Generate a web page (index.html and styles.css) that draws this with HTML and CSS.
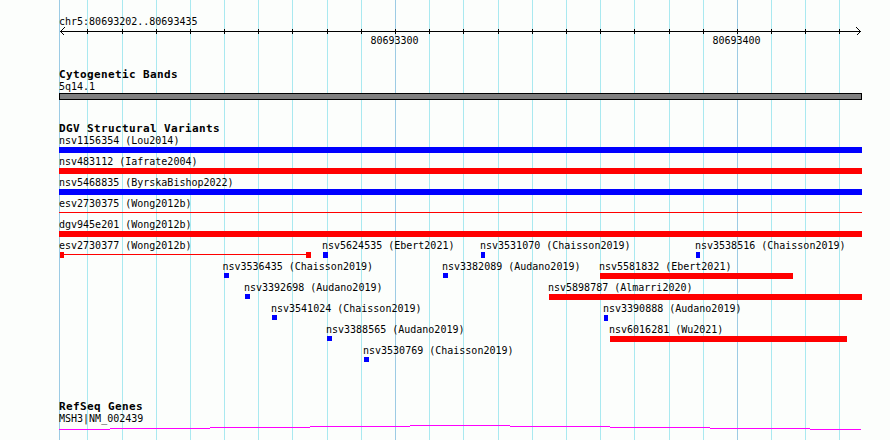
FILE: index.html
```html
<!DOCTYPE html>
<html lang="en">
<head>
<meta charset="utf-8">
<title>chr5:80693202..80693435</title>
<link rel="stylesheet" href="styles.css">
</head>
<body>
<div class="browser">
  <svg class="grid" width="890" height="440" viewBox="0 0 890 440" shape-rendering="crispEdges">
    <path class="major" d="M59.5 0V440M395.5 0V440M737.5 0V440"/>
    <path class="minor" d="M87.5 0V440M122.5 0V440M156.5 0V440M190.5 0V440M224.5 0V440M258.5 0V440M292.5 0V440M327.5 0V440M361.5 0V440M429.5 0V440M463.5 0V440M498.5 0V440M532.5 0V440M566.5 0V440M600.5 0V440M634.5 0V440M669.5 0V440M703.5 0V440M771.5 0V440M805.5 0V440M839.5 0V440"/>
  </svg>
  <div class="tracks">
    <svg class="canvas" width="890" height="68" viewBox="0 0 890 68">
      <text class="lbl" x="59" y="25">chr5:80693202..80693435</text>
      <g class="axis" shape-rendering="crispEdges">
        <path d="M60 31.5H861"/>
        <path d="M87.5 29V34M122.5 29V34M156.5 29V34M190.5 29V34M224.5 29V34M258.5 29V34M292.5 29V34M327.5 29V34M361.5 29V34M395.5 29V34M429.5 29V34M463.5 29V34M498.5 29V34M532.5 29V34M566.5 29V34M600.5 29V34M634.5 29V34M669.5 29V34M703.5 29V34M737.5 29V34M771.5 29V34M805.5 29V34M839.5 29V34"/>
        <polyline class="arrow" points="64.5,27.5 60.5,31.5 64.5,35.5"/>
        <polyline class="arrow" points="856.5,27.5 860.5,31.5 856.5,35.5"/>
      </g>
      <text class="lbl mid" x="394.5" y="44">80693300</text>
      <text class="lbl mid" x="736.5" y="44">80693400</text>
    </svg>

    <section class="track">
      <div class="track-title">Cytogenetic Bands</div>
      <div class="track-sub">5q14.1</div>
      <svg class="canvas" width="890" height="30" viewBox="0 92 890 30" shape-rendering="crispEdges">
        <rect class="band" x="59.5" y="93.5" width="802" height="6"/>
      </svg>
    </section>

    <section class="track">
      <div class="track-title">DGV Structural Variants</div>
      <svg class="canvas" width="890" height="265" viewBox="0 135 890 265" shape-rendering="crispEdges">
        <text class="lbl" x="59" y="144">nsv1156354 (Lou2014)</text>
        <rect class="blue" x="59" y="147" width="803" height="6"/>

        <text class="lbl" x="59" y="165">nsv483112 (Iafrate2004)</text>
        <rect class="red" x="59" y="168" width="803" height="6"/>

        <text class="lbl" x="59" y="186">nsv5468835 (ByrskaBishop2022)</text>
        <rect class="blue" x="59" y="189" width="803" height="6"/>

        <text class="lbl" x="59" y="207">esv2730375 (Wong2012b)</text>
        <rect class="red" x="59" y="212" width="803" height="1"/>

        <text class="lbl" x="59" y="228">dgv945e201 (Wong2012b)</text>
        <rect class="red" x="59" y="231" width="803" height="6"/>

        <text class="lbl" x="59" y="249">esv2730377 (Wong2012b)</text>
        <rect class="red" x="60" y="254" width="246" height="1"/>
        <rect class="red" x="60" y="252" width="4" height="6"/>
        <rect class="red" x="306" y="252" width="5" height="6"/>

        <text class="lbl" x="322" y="249">nsv5624535 (Ebert2021)</text>
        <rect class="blue" x="323" y="252" width="5" height="6"/>

        <text class="lbl" x="480" y="249">nsv3531070 (Chaisson2019)</text>
        <rect class="blue" x="481" y="252" width="4" height="6"/>

        <text class="lbl" x="695" y="249">nsv3538516 (Chaisson2019)</text>
        <rect class="blue" x="696" y="252" width="4" height="6"/>

        <text class="lbl" x="222.5" y="270">nsv3536435 (Chaisson2019)</text>
        <rect class="blue" x="224" y="273" width="5" height="5"/>

        <text class="lbl" x="442" y="270">nsv3382089 (Audano2019)</text>
        <rect class="blue" x="443" y="273" width="5" height="5"/>

        <text class="lbl" x="599" y="270">nsv5581832 (Ebert2021)</text>
        <rect class="red" x="600" y="273" width="193" height="6"/>

        <text class="lbl" x="244" y="291">nsv3392698 (Audano2019)</text>
        <rect class="blue" x="245" y="294" width="5" height="5"/>

        <text class="lbl" x="548" y="291">nsv5898787 (Almarri2020)</text>
        <rect class="red" x="549" y="294" width="313" height="6"/>

        <text class="lbl" x="271" y="312">nsv3541024 (Chaisson2019)</text>
        <rect class="blue" x="272" y="315" width="5" height="5"/>

        <text class="lbl" x="603" y="312">nsv3390888 (Audano2019)</text>
        <rect class="blue" x="604" y="315" width="4" height="6"/>

        <text class="lbl" x="326" y="333">nsv3388565 (Audano2019)</text>
        <rect class="blue" x="327" y="336" width="5" height="5"/>

        <text class="lbl" x="609" y="333">nsv6016281 (Wu2021)</text>
        <rect class="red" x="610" y="336" width="237" height="6"/>

        <text class="lbl" x="363" y="354">nsv3530769 (Chaisson2019)</text>
        <rect class="blue" x="364" y="357" width="5" height="5"/>
      </svg>
    </section>

    <section class="track">
      <div class="track-title">RefSeq Genes</div>
      <div class="track-sub">MSH3|NM_002439</div>
      <svg class="canvas" width="890" height="16" viewBox="0 424 890 16" shape-rendering="crispEdges">
        <path class="gene" d="M59 429.5H110M110 428.5H210M210 427.5H310M310 426.5H410M410 425.5H510M510 426.5H610M610 427.5H710M710 428.5H810M810 429.5H861"/>
      </svg>
    </section>
  </div>
</div>
</body>
</html>
```

FILE: styles.css
```css
html, body {
  margin: 0;
  padding: 0;
  background: #fcfefc;
}

.browser {
  position: relative;
  width: 890px;
  height: 440px;
  overflow: hidden;
  background: #fcfefc;
  font-family: "DejaVu Sans Mono", "Liberation Mono", monospace;
  color: #000;
}

.grid {
  position: absolute;
  top: 0;
  left: 0;
  display: block;
}

.grid .minor {
  stroke: #a9e9f0;
  stroke-width: 1;
  fill: none;
}

.grid .major {
  stroke: #9ccbe4;
  stroke-width: 1;
  fill: none;
}

.tracks {
  position: relative;
  display: flex;
  flex-direction: column;
}

.track {
  display: flex;
  flex-direction: column;
}

.canvas {
  display: block;
  overflow: visible;
}

.track-title {
  height: 13px;
  padding-left: 59px;
  font-family: "DejaVu Sans Mono", "Liberation Mono", monospace;
  font-weight: bold;
  font-size: 11px;
  line-height: 13px;
  letter-spacing: 0.38px;
  white-space: nowrap;
}

.track-sub {
  height: 11px;
  padding-left: 59px;
  font-family: "DejaVu Sans Mono", "Liberation Mono", monospace;
  font-size: 10px;
  line-height: 11px;
  white-space: nowrap;
}

.lbl {
  font-family: "DejaVu Sans Mono", "Liberation Mono", monospace;
  font-size: 10px;
  fill: #000;
}

.mid {
  text-anchor: middle;
}

.axis path,
.axis .arrow {
  stroke: #000;
  stroke-width: 1;
  fill: none;
}

.band {
  fill: #808080;
  stroke: #000;
  stroke-width: 1;
}

.blue {
  fill: #0000ff;
}

.red {
  fill: #ff0000;
}

.gene {
  stroke: #ff00ff;
  stroke-width: 1;
  fill: none;
}
```
